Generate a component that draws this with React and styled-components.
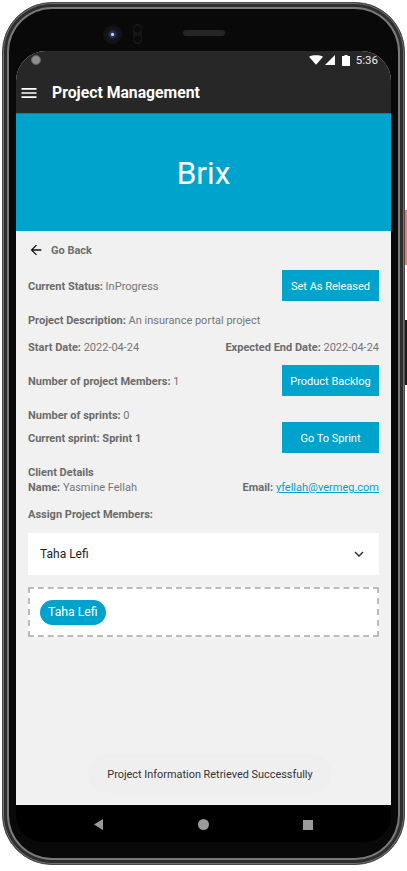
import React from "react";
import styled, { createGlobalStyle } from "styled-components";
import { MdArrowBack, MdKeyboardArrowDown, MdMenu } from "react-icons/md";

const GlobalStyle = createGlobalStyle`
  html, body { margin: 0; padding: 0; background: #fff; }
  body { font-family: Roboto, "Liberation Sans", sans-serif; }
`;

export default function App() {
  return (
    <Page>
      <GlobalStyle />
      <Phone>
        <SideKey $top={207} $height={55} $color="#e8805f" />
        <SideKey $top={317} $height={65} $color="#1e1e1e" />
        <TopBezel>
          <Camera>
            <Lens />
            <Sensor />
          </Camera>
          <Speaker />
        </TopBezel>
        <Screen>
          <StatusBar>
            <Dot />
            <StatusIcons>
              <svg width="14" height="10" viewBox="0 0 15 10">
                <path d="M0 1.5C4 -.5 11 -.5 15 1.5L7.5 10Z" fill="#fff" />
              </svg>
              <svg width="10" height="10" viewBox="0 0 10 10">
                <path d="M10 0V10H0Z" fill="#fff" />
              </svg>
              <Battery width="8" height="11" viewBox="0 0 8 11">
                <path d="M2.5 0H5.5V1H8V11H0V1H2.5Z" fill="#fff" />
              </Battery>
              <Clock>5:36</Clock>
            </StatusIcons>
          </StatusBar>
          <AppBar>
            <MdMenu size={20} color="#fff" />
            <AppTitle>Project Management</AppTitle>
          </AppBar>
          <Hero>Brix</Hero>
          <Content>
            <BackRow>
              <MdArrowBack size={16} color="#111" />
              <span>Go Back</span>
            </BackRow>
            <Row $height={31} $top={12}>
              <RowLabel><b>Current Status:</b> InProgress</RowLabel>
              <ActionButton>Set As Released</ActionButton>
            </Row>
            <Row $height={13} $top={13}>
              <Info><b>Project Description:</b> An insurance portal project</Info>
            </Row>
            <Row $height={13} $top={14}>
              <Info><b>Start Date:</b> 2022-04-24</Info>
              <Info><b>Expected End Date:</b> 2022-04-24</Info>
            </Row>
            <Row $height={31} $top={11}>
              <RowLabel><b>Number of project Members:</b> 1</RowLabel>
              <ActionButton>Product Backlog</ActionButton>
            </Row>
            <SprintRow>
              <SprintInfo>
                <Info><b>Number of sprints:</b> 0</Info>
                <Info><b>Current sprint: Sprint 1</b></Info>
              </SprintInfo>
              <SprintButton>Go To Sprint</SprintButton>
            </SprintRow>
            <ClientTitle><b>Client Details</b></ClientTitle>
            <Row $height={15} $top={1}>
              <Info><b>Name:</b> Yasmine Fellah</Info>
              <Info><b>Email:</b> <MailLink href="#">yfellah@vermeg.com</MailLink></Info>
            </Row>
            <AssignLabel><b>Assign Project Members:</b></AssignLabel>
            <SelectBox>
              <span>Taha Lefi</span>
              <MdKeyboardArrowDown size={18} color="#333" />
            </SelectBox>
            <DropZone>
              <Chip>Taha Lefi</Chip>
            </DropZone>
          </Content>
          <Toast>Project Information Retrieved Successfully</Toast>
        </Screen>
        <NavBar>
          <svg width="9" height="11" viewBox="0 0 9 11">
            <path d="M9 0V11L0 5.5Z" fill="#9a9a9a" />
          </svg>
          <NavCircle />
          <NavSquare />
        </NavBar>
      </Phone>
    </Page>
  );
}

const Page = styled.div`
  width: 407px;
  height: 871px;
  overflow: hidden;
  padding: 2px 2px 0 2px;
  box-sizing: border-box;
`;

const Phone = styled.div`
  position: relative;
  width: 403px;
  height: 863px;
  box-sizing: border-box;
  background: #090909;
  border-radius: 50px;
  border: 1px solid #4a4a4a;
  box-shadow: inset 0 0 0 1px #707070, inset 0 0 0 4px #2e2e2e, inset 0 0 0 6px #7a7a7a;
  display: flex;
  flex-direction: column;
  align-items: center;
`;

const SideKey = styled.div`
  position: absolute;
  right: -3px;
  top: ${(p) => p.$top}px;
  width: 2px;
  height: ${(p) => p.$height}px;
  background: ${(p) => p.$color};
`;

const TopBezel = styled.div`
  height: 48px;
  width: 100%;
  flex-shrink: 0;
  display: flex;
  align-items: flex-start;
  padding: 21px 0 0 100px;
  box-sizing: border-box;
`;

const Camera = styled.div`
  display: flex;
  align-items: center;
  gap: 11px;
  width: 80px;
`;

const Lens = styled.div`
  width: 19px;
  height: 19px;
  border-radius: 50%;
  background: radial-gradient(circle, #d0d4e8 0 1px, #2c3a68 2px, #15151c 5px, #121214 9px);
`;

const Sensor = styled.div`
  width: 9px;
  height: 20px;
  border-radius: 5px;
  background:
    radial-gradient(circle at 50% 26%, #0a0a0a 0 3px, transparent 3.5px),
    radial-gradient(circle at 50% 74%, #0a0a0a 0 3px, transparent 3.5px),
    #161616;
`;

const Speaker = styled.div`
  width: 42px;
  height: 6px;
  margin-top: 6px;
  border-radius: 3px;
  background: #252525;
`;

const Screen = styled.div`
  position: relative;
  width: 375px;
  height: 754px;
  flex-shrink: 0;
  background: #f1f1f1;
  border-radius: 30px 30px 0 0;
  overflow: hidden;
  display: flex;
  flex-direction: column;
`;

const StatusBar = styled.div`
  height: 18px;
  background: #272727;
  display: flex;
  align-items: center;
  justify-content: space-between;
  padding: 0 13px 0 15px;
  box-sizing: border-box;
`;

const Dot = styled.div`
  width: 10px;
  height: 10px;
  border-radius: 50%;
  background: #8d8d8d;
  border: 1px solid #666;
  box-sizing: border-box;
`;

const StatusIcons = styled.div`
  display: flex;
  align-items: center;
  gap: 2px;
`;

const Battery = styled.svg`
  margin-left: 5px;
`;

const Clock = styled.span`
  color: #eee;
  font-size: 11.5px;
  margin-left: 4px;
`;

const AppBar = styled.div`
  height: 44px;
  background: #272727;
  display: flex;
  align-items: center;
  gap: 13px;
  padding-left: 3px;
  padding-top: 3px;
  box-sizing: border-box;
`;

const AppTitle = styled.div`
  color: #fff;
  font-size: 15.75px;
  font-weight: 700;
`;

const Hero = styled.div`
  height: 118px;
  background: #00a3cc;
  border-top: 1px solid #1c7a94;
  padding-top: 2px;
  box-sizing: border-box;
  display: flex;
  align-items: center;
  justify-content: center;
  color: #fff;
  font-size: 31.5px;
`;

const Content = styled.div`
  padding: 11px 12px 0;
  display: flex;
  flex-direction: column;
`;

const BackRow = styled.div`
  display: flex;
  align-items: center;
  gap: 7px;
  height: 16px;
  font-size: 11px;
  font-weight: 700;
  color: #6f6f6f;
`;

const Row = styled.div`
  display: flex;
  align-items: center;
  justify-content: space-between;
  height: ${(p) => p.$height}px;
  margin-top: ${(p) => p.$top}px;
`;

const Info = styled.span`
  font-size: 11px;
  line-height: 13px;
  color: #767676;
  b {
    font-weight: 700;
    color: #6b6b6b;
  }
`;

const RowLabel = styled(Info)`
  padding-top: 2px;
`;

const ActionButton = styled.button`
  width: 97px;
  height: 31px;
  flex-shrink: 0;
  border: 0;
  padding: 1px 0 0;
  background: #00a3cc;
  color: #fff;
  font-family: inherit;
  font-size: 11px;
`;

const SprintButton = styled(ActionButton)`
  margin-top: 13px;
`;

const SprintRow = styled.div`
  display: flex;
  align-items: flex-start;
  justify-content: space-between;
  margin-top: 13px;
`;

const SprintInfo = styled.div`
  display: flex;
  flex-direction: column;
  gap: 10px;
`;

const MailLink = styled.a`
  color: #00a3cc;
`;

const ClientTitle = styled(Info).attrs({ as: "div" })`
  margin-top: 13px;
`;

const AssignLabel = styled(Info).attrs({ as: "div" })`
  margin-top: 13px;
`;

const SelectBox = styled.div`
  height: 42px;
  margin-top: 12px;
  background: #fff;
  display: flex;
  align-items: center;
  justify-content: space-between;
  padding: 0 11.5px 0 12px;
  font-size: 12px;
  color: #222;
`;

const DropZone = styled.div`
  height: 50px;
  margin-top: 12px;
  box-sizing: border-box;
  background: #fff;
  border: 2px dashed #bbb;
  display: flex;
  align-items: center;
  padding-left: 10px;
`;

const Chip = styled.div`
  height: 25px;
  padding: 0 8px;
  border-radius: 13px;
  background: #00a3cc;
  color: #fff;
  font-size: 12.25px;
  display: flex;
  align-items: center;
`;

const Toast = styled.div`
  position: absolute;
  left: 72px;
  bottom: 12px;
  width: 244px;
  height: 39px;
  padding-top: 2px;
  box-sizing: border-box;
  border-radius: 20px;
  background: #efefef;
  color: #333;
  font-size: 10.9px;
  display: flex;
  align-items: center;
  justify-content: center;
`;

const NavBar = styled.div`
  height: 37px;
  width: 375px;
  background: #000;
  border-radius: 0 0 26px 26px;
  display: flex;
  align-items: center;
  padding: 2px 78px 0;
  box-sizing: border-box;
  justify-content: space-between;
`;

const NavCircle = styled.div`
  width: 11px;
  height: 11px;
  border-radius: 50%;
  background: #9a9a9a;
`;

const NavSquare = styled.div`
  width: 10px;
  height: 10px;
  background: #9a9a9a;
`;
